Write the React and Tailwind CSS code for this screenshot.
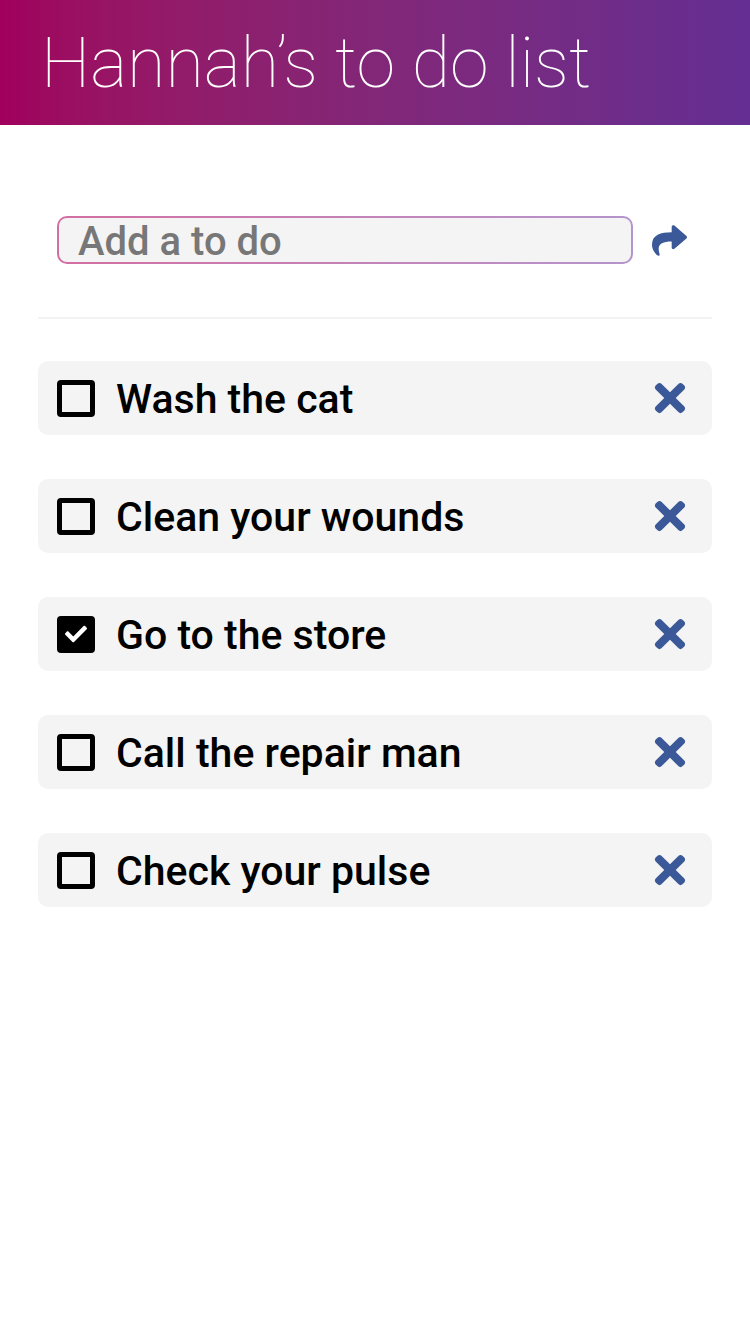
import React, { useState } from "react";
import { FaCheck, FaTimes, FaShare } from "react-icons/fa";

const initialTodos = [
  { id: 1, text: "Wash the cat", done: false },
  { id: 2, text: "Clean your wounds", done: false },
  { id: 3, text: "Go to the store", done: true },
  { id: 4, text: "Call the repair man", done: false },
  { id: 5, text: "Check your pulse", done: false },
];

const Checkbox = ({ checked }) =>
  checked ? (
    <span className="w-[38px] h-[37px] rounded-[4px] bg-black flex items-center justify-center text-white">
      <FaCheck size={22} />
    </span>
  ) : (
    <span className="block w-[38px] h-[37px] rounded-[4px] border-[5px] border-black" />
  );

const App = () => {
  const [todos, setTodos] = useState(initialTodos);
  const [draft, setDraft] = useState("");

  const toggle = (id) =>
    setTodos((prev) => prev.map((t) => (t.id === id ? { ...t, done: !t.done } : t)));

  const remove = (id) => setTodos((prev) => prev.filter((t) => t.id !== id));

  const add = () => {
    if (!draft.trim()) return;
    setTodos((prev) => [...prev, { id: Date.now(), text: draft.trim(), done: false }]);
    setDraft("");
  };

  return (
    <div className="min-h-[1334px] w-[750px] bg-white font-['Roboto',sans-serif]">
      {/* Header */}
      <header className="h-[125px] bg-gradient-to-r from-[#a0005c] to-[#642e92] flex items-center pl-[41px]">
        <h1 className="text-[70px] font-thin text-white leading-none mt-[1px]">
          Hannah’s to do list
        </h1>
      </header>

      <div className="px-[38px]">
        {/* Add row */}
        <div className="flex items-center pl-[19px] pt-[91px]">
          <div className="w-[576px] h-[48px] rounded-[10px] p-[2px] bg-gradient-to-r from-[#d26ea2] to-[#b494cc]">
            <input
              value={draft}
              onChange={(e) => setDraft(e.target.value)}
              onKeyDown={(e) => e.key === "Enter" && add()}
              placeholder="Add a to do"
              className="w-full h-full rounded-[8px] bg-[#f4f4f4] pl-[19px] pt-[2px] text-[40px] font-medium text-[#333] placeholder:text-[#777] outline-none leading-none"
            />
          </div>
          <button onClick={add} className="ml-[19px] text-[#3b5998]">
            <FaShare size={35} />
          </button>
        </div>

        <div className="mt-[53px] h-[2px] bg-[#f2f2f2]" />

        {/* List */}
        <ul className="mt-[42px] flex flex-col gap-[44px]">
          {todos.map((todo) => (
            <li
              key={todo.id}
              className="h-[74px] rounded-[10px] bg-[#f4f4f4] flex items-center pl-[19px] pr-[20px]"
            >
              <button onClick={() => toggle(todo.id)} className="text-black">
                <Checkbox checked={todo.done} />
              </button>
              <span className="ml-[21px] mt-[3px] flex-1 text-[41px] font-medium text-black leading-none">
                {todo.text}
              </span>
              <button onClick={() => remove(todo.id)} className="text-[#3b5998]">
                <FaTimes size={44} />
              </button>
            </li>
          ))}
        </ul>
      </div>
    </div>
  );
};

export default App;
